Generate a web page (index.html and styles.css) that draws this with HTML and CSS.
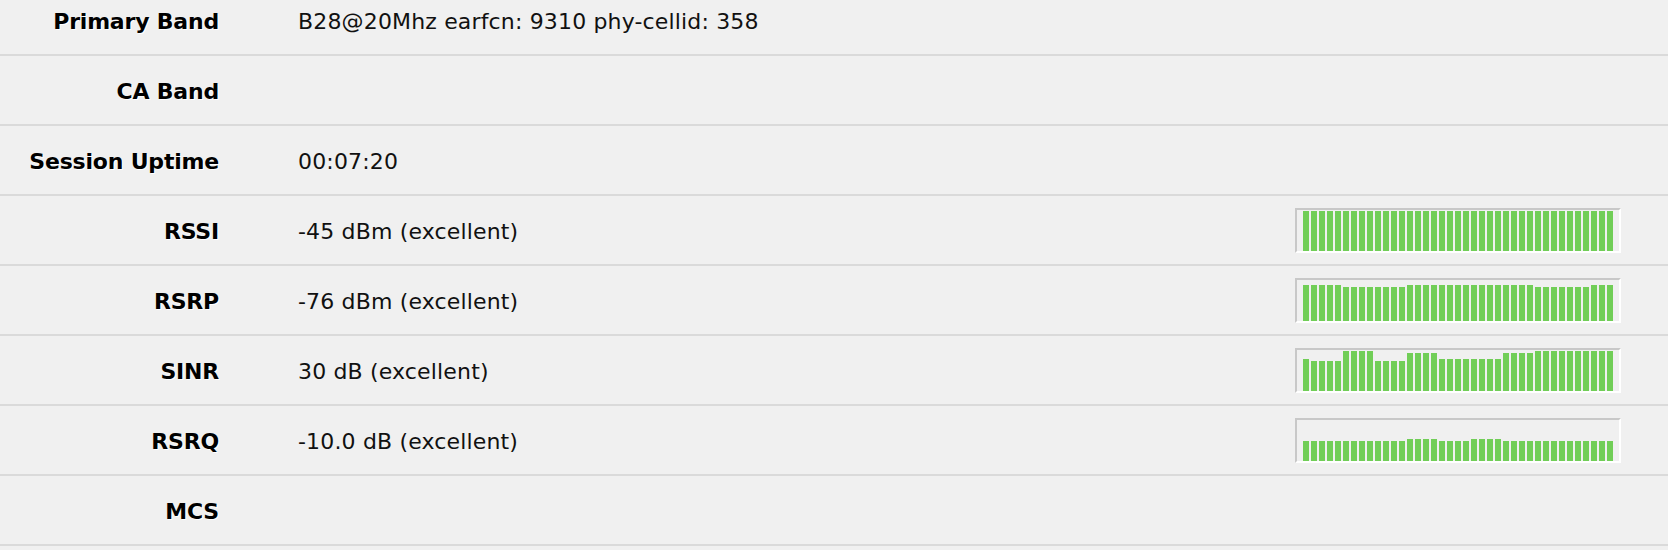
FILE: index.html
```html
<!DOCTYPE html>
<html>
<head>
<meta charset="utf-8">
<link rel="stylesheet" href="styles.css">
</head>
<body>
<div class="table">
  <div class="row"><div class="label">Primary Band</div><div class="value">B28@20Mhz earfcn: 9310 phy-cellid: 358</div></div>
  <div class="row"><div class="label">CA Band</div><div class="value"></div></div>
  <div class="row"><div class="label">Session Uptime</div><div class="value">00:07:20</div></div>
  <div class="row"><div class="label">RSSI</div><div class="value">-45 dBm (excellent)</div>
    <div class="chart">
      <span class="bar" style="height:40px"></span><span class="bar" style="height:40px"></span><span class="bar" style="height:40px"></span><span class="bar" style="height:40px"></span><span class="bar" style="height:40px"></span><span class="bar" style="height:40px"></span><span class="bar" style="height:40px"></span><span class="bar" style="height:40px"></span><span class="bar" style="height:40px"></span><span class="bar" style="height:40px"></span>
      <span class="bar" style="height:40px"></span><span class="bar" style="height:40px"></span><span class="bar" style="height:40px"></span><span class="bar" style="height:40px"></span><span class="bar" style="height:40px"></span><span class="bar" style="height:40px"></span><span class="bar" style="height:40px"></span><span class="bar" style="height:40px"></span><span class="bar" style="height:40px"></span><span class="bar" style="height:40px"></span>
      <span class="bar" style="height:40px"></span><span class="bar" style="height:40px"></span><span class="bar" style="height:40px"></span><span class="bar" style="height:40px"></span><span class="bar" style="height:40px"></span><span class="bar" style="height:40px"></span><span class="bar" style="height:40px"></span><span class="bar" style="height:40px"></span><span class="bar" style="height:40px"></span><span class="bar" style="height:40px"></span>
      <span class="bar" style="height:40px"></span><span class="bar" style="height:40px"></span><span class="bar" style="height:40px"></span><span class="bar" style="height:40px"></span><span class="bar" style="height:40px"></span><span class="bar" style="height:40px"></span><span class="bar" style="height:40px"></span><span class="bar" style="height:40px"></span><span class="bar" style="height:40px"></span>
    </div>
  </div>
  <div class="row"><div class="label">RSRP</div><div class="value">-76 dBm (excellent)</div>
    <div class="chart">
      <span class="bar" style="height:36px"></span><span class="bar" style="height:36px"></span><span class="bar" style="height:36px"></span><span class="bar" style="height:36px"></span><span class="bar" style="height:36px"></span>
      <span class="bar" style="height:34px"></span><span class="bar" style="height:34px"></span><span class="bar" style="height:34px"></span><span class="bar" style="height:34px"></span><span class="bar" style="height:34px"></span><span class="bar" style="height:34px"></span><span class="bar" style="height:34px"></span><span class="bar" style="height:34px"></span>
      <span class="bar" style="height:36px"></span><span class="bar" style="height:36px"></span><span class="bar" style="height:36px"></span><span class="bar" style="height:36px"></span><span class="bar" style="height:36px"></span><span class="bar" style="height:36px"></span><span class="bar" style="height:36px"></span><span class="bar" style="height:36px"></span>
      <span class="bar" style="height:36px"></span><span class="bar" style="height:36px"></span><span class="bar" style="height:36px"></span><span class="bar" style="height:36px"></span><span class="bar" style="height:36px"></span><span class="bar" style="height:36px"></span><span class="bar" style="height:36px"></span><span class="bar" style="height:36px"></span>
      <span class="bar" style="height:34px"></span><span class="bar" style="height:34px"></span><span class="bar" style="height:34px"></span><span class="bar" style="height:34px"></span><span class="bar" style="height:34px"></span><span class="bar" style="height:34px"></span><span class="bar" style="height:34px"></span>
      <span class="bar" style="height:36px"></span><span class="bar" style="height:36px"></span><span class="bar" style="height:36px"></span>
    </div>
  </div>
  <div class="row"><div class="label">SINR</div><div class="value">30 dB (excellent)</div>
    <div class="chart">
      <span class="bar" style="height:32px"></span>
      <span class="bar" style="height:30px"></span><span class="bar" style="height:30px"></span><span class="bar" style="height:30px"></span><span class="bar" style="height:30px"></span>
      <span class="bar" style="height:40px"></span><span class="bar" style="height:40px"></span><span class="bar" style="height:40px"></span><span class="bar" style="height:40px"></span>
      <span class="bar" style="height:30px"></span><span class="bar" style="height:30px"></span><span class="bar" style="height:30px"></span><span class="bar" style="height:30px"></span>
      <span class="bar" style="height:38px"></span><span class="bar" style="height:38px"></span><span class="bar" style="height:38px"></span><span class="bar" style="height:38px"></span>
      <span class="bar" style="height:32px"></span><span class="bar" style="height:32px"></span><span class="bar" style="height:32px"></span><span class="bar" style="height:32px"></span><span class="bar" style="height:32px"></span><span class="bar" style="height:32px"></span><span class="bar" style="height:32px"></span><span class="bar" style="height:32px"></span>
      <span class="bar" style="height:38px"></span><span class="bar" style="height:38px"></span><span class="bar" style="height:38px"></span><span class="bar" style="height:38px"></span>
      <span class="bar" style="height:40px"></span><span class="bar" style="height:40px"></span><span class="bar" style="height:40px"></span><span class="bar" style="height:40px"></span><span class="bar" style="height:40px"></span><span class="bar" style="height:40px"></span><span class="bar" style="height:40px"></span><span class="bar" style="height:40px"></span><span class="bar" style="height:40px"></span><span class="bar" style="height:40px"></span>
    </div>
  </div>
  <div class="row"><div class="label">RSRQ</div><div class="value">-10.0 dB (excellent)</div>
    <div class="chart">
      <span class="bar" style="height:20px"></span><span class="bar" style="height:20px"></span><span class="bar" style="height:20px"></span><span class="bar" style="height:20px"></span><span class="bar" style="height:20px"></span><span class="bar" style="height:20px"></span><span class="bar" style="height:20px"></span><span class="bar" style="height:20px"></span><span class="bar" style="height:20px"></span><span class="bar" style="height:20px"></span><span class="bar" style="height:20px"></span><span class="bar" style="height:20px"></span><span class="bar" style="height:20px"></span>
      <span class="bar" style="height:22px"></span><span class="bar" style="height:22px"></span><span class="bar" style="height:22px"></span><span class="bar" style="height:22px"></span>
      <span class="bar" style="height:20px"></span><span class="bar" style="height:20px"></span><span class="bar" style="height:20px"></span><span class="bar" style="height:20px"></span>
      <span class="bar" style="height:22px"></span><span class="bar" style="height:22px"></span><span class="bar" style="height:22px"></span><span class="bar" style="height:22px"></span>
      <span class="bar" style="height:20px"></span><span class="bar" style="height:20px"></span><span class="bar" style="height:20px"></span><span class="bar" style="height:20px"></span><span class="bar" style="height:20px"></span><span class="bar" style="height:20px"></span><span class="bar" style="height:20px"></span><span class="bar" style="height:20px"></span><span class="bar" style="height:20px"></span><span class="bar" style="height:20px"></span><span class="bar" style="height:20px"></span><span class="bar" style="height:20px"></span><span class="bar" style="height:20px"></span><span class="bar" style="height:20px"></span>
    </div>
  </div>
  <div class="row"><div class="label">MCS</div><div class="value"></div></div>
</div>
</body>
</html>
```
FILE: styles.css
```css
html, body {
  margin: 0;
  padding: 0;
  background: #f0f0f0;
  overflow: hidden;
}

body {
  font-family: "DejaVu Sans", Verdana, sans-serif;
  font-size: 22px;
  line-height: 26px;
  color: #000;
}

.table {
  margin-top: -14px;
}

.row {
  display: flex;
  align-items: center;
  height: 68px;
  border-bottom: 2px solid #dadada;
  padding-right: 47px;
}

.label {
  width: 219px;
  flex: none;
  padding-top: 4px;
  text-align: right;
  font-weight: bold;
  letter-spacing: -0.2px;
  text-shadow: 1px 1px 0 #fff;
}

.value {
  flex: 1;
  padding-top: 4px;
  margin-left: 79px;
  color: #111;
  letter-spacing: 0.16px;
}

.chart {
  flex: none;
  box-sizing: border-box;
  width: 326px;
  height: 45px;
  padding: 0 6px;
  border-style: solid;
  border-width: 2px;
  border-color: #c8c8c8 #fff #fff #c8c8c8;
  display: flex;
  align-items: flex-end;
  gap: 2px;
}

.bar {
  display: block;
  width: 6px;
  flex: none;
  background: #71ce57;
}
```
